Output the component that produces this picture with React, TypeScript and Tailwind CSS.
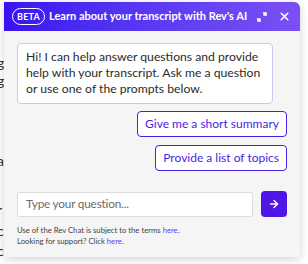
import { ArrowRight, X } from 'lucide-react'

const PROMPTS = ['Give me a short summary', 'Provide a list of topics']

const BG_FRAGMENTS = [
  { top: 'top-[52px]', text: 'g' },
  { top: 'top-[70px]', text: 'g:' },
  { top: 'top-[92px]', text: '.' },
  { top: 'top-[112px]', text: ':' },
  { top: 'top-[130px]', text: ',' },
  { top: 'top-[150px]', text: 'a' },
  { top: 'top-[170px]', text: 'l' },
  { top: 'top-[199px]', text: 'r' },
  { top: 'top-[220px]', text: 'c' },
  { top: 'top-[240px]', text: 'c' },
]

function ExpandIcon() {
  return (
    <svg width="10" height="10" viewBox="0 0 10 10" fill="none" stroke="white" strokeWidth="1.6">
      <path d="M6 1h3v3M9 1L6.5 3.5" />
      <path d="M4 9H1V6M1 9l2.5-2.5" />
    </svg>
  )
}

export default function App() {
  return (
    <div className="relative w-[308px] h-[264px] bg-white overflow-hidden" style={{ fontFamily: 'Lato, sans-serif' }}>
      {/* page text behind the widget */}
      {BG_FRAGMENTS.map(({ top, text }, i) => (
        <span key={i} className={`absolute ${top} -left-[3px] text-[14px] text-[#333]`}>{text}</span>
      ))}

      <div className="absolute left-[4px] top-[2px] w-[296px] h-[255px] bg-[#f5f5f5] rounded-tr-[6px] shadow-[0_2px_8px_rgba(0,0,0,0.18)] flex flex-col">
        {/* header */}
        <div className="h-[29px] rounded-tr-[6px] bg-gradient-to-r from-[#3a10ef] to-[#7c4ff5] flex items-center pl-[8px] pr-[9px]">
          <span className="h-[17px] px-[4px] rounded-full border border-white text-white text-[9px] font-bold tracking-wide flex items-center leading-none">
            BETA
          </span>
          <span className="ml-[4px] text-white text-[11px] font-bold whitespace-nowrap">
            Learn about your transcript with Rev&apos;s AI
          </span>
          <span className="ml-auto flex items-center gap-[11px]">
            <ExpandIcon />
            <X className="h-[13px] w-[13px] text-white" strokeWidth={3} />
          </span>
        </div>

        {/* body */}
        <div className="flex-1 flex flex-col px-[13px] pt-[12px]">
          <div className="w-[256px] bg-white border border-[#cfc6f2] rounded-[4px] px-[8px] pt-[5px] pb-[6px] text-[12.2px] leading-[16px] text-[#2b2b2b]">
            Hi! I can help answer questions and provide help with your transcript. Ask me a question or use one of the prompts below.
          </div>

          <div className="flex flex-col items-end gap-[8px] mt-[7px]">
            {PROMPTS.map((p) => (
              <button
                key={p}
                className="h-[26px] px-[7px] rounded-[4px] border border-[#4a1ee6] bg-white text-[#4a1ee6] text-[12px] leading-none"
              >
                {p}
              </button>
            ))}
          </div>

          <div className="flex items-center gap-[8px] mt-auto">
            <div className="w-[236px] h-[25px] bg-white border border-[#dcdcdc] rounded-[3px] flex items-center px-[8px] text-[11.8px] tracking-[-0.2px] text-[#6b6b6b]">
              Type your question...
            </div>
            <button className="w-[26px] h-[26px] rounded-[4px] bg-[#4f17e6] flex items-center justify-center">
              <ArrowRight className="h-[12px] w-[12px] text-white" strokeWidth={3} />
            </button>
          </div>

          <div className="mt-[8px] mb-[10px] text-[7.7px] leading-[11px] text-[#444]">
            <p>
              Use of the Rev Chat is subject to the terms <span className="text-[#5b3cf0]">here</span>.
            </p>
            <p>
              Looking for support? Click <span className="text-[#5b3cf0]">here</span>.
            </p>
          </div>
        </div>
      </div>
    </div>
  )
}
